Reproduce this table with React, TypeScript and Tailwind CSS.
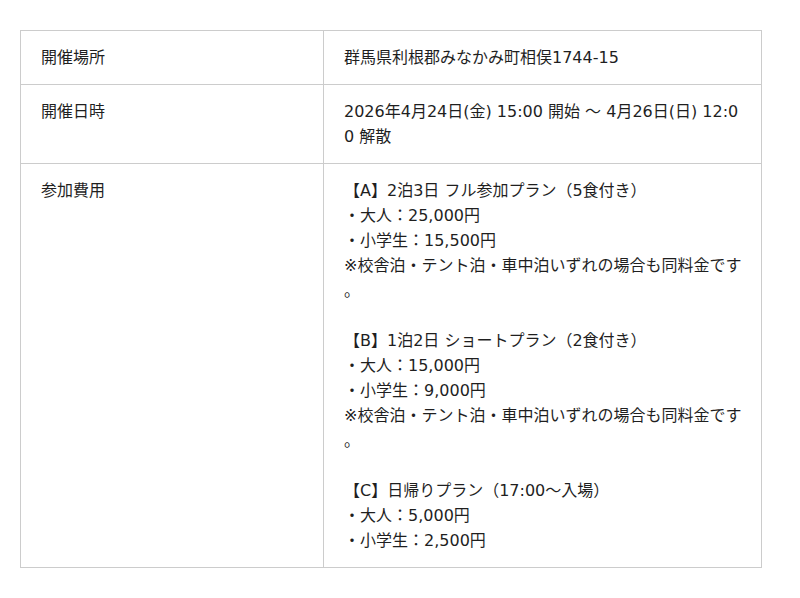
const plans = [
  {
    title: "【A】2泊3日 フル参加プラン（5食付き）",
    lines: ["・大人：25,000円", "・小学生：15,500円", "※校舎泊・テント泊・車中泊いずれの場合も同料金です。"],
  },
  {
    title: "【B】1泊2日 ショートプラン（2食付き）",
    lines: ["・大人：15,000円", "・小学生：9,000円", "※校舎泊・テント泊・車中泊いずれの場合も同料金です。"],
  },
  {
    title: "【C】日帰りプラン（17:00〜入場）",
    lines: ["・大人：5,000円", "・小学生：2,500円"],
  },
];

const Row = ({ label, children, last }: { label: string; children: React.ReactNode; last?: boolean }) => (
  <div className={`grid grid-cols-[303px_1fr] ${last ? "" : "border-b border-[#cccccc]"}`}>
    <div className="border-r border-[#cccccc] pl-5 py-[14px]">{label}</div>
    <div className="pl-5 pr-[15px] py-[14px] [line-break:anywhere]">{children}</div>
  </div>
);

export default function App() {
  return (
    <div className="min-h-[598px] bg-white pt-[30px] pl-5 text-[16px] leading-[25px] text-[#1f1f1f] font-['DejaVu_Sans','Noto_Sans_CJK_JP',sans-serif]">
      <div className="w-[742px] border border-[#cccccc]">
        <Row label="開催場所">群馬県利根郡みなかみ町相俣1744-15</Row>
        <Row label="開催日時">2026年4月24日(金) 15:00 開始 〜 4月26日(日) 12:00 解散</Row>
        <Row label="参加費用" last>
          {plans.map((p, i) => (
            <div key={i} className={i > 0 ? "mt-[25px]" : ""}>
              <div>{p.title}</div>
              {p.lines.map((l) => (
                <div key={l}>{l}</div>
              ))}
            </div>
          ))}
        </Row>
      </div>
    </div>
  );
}
